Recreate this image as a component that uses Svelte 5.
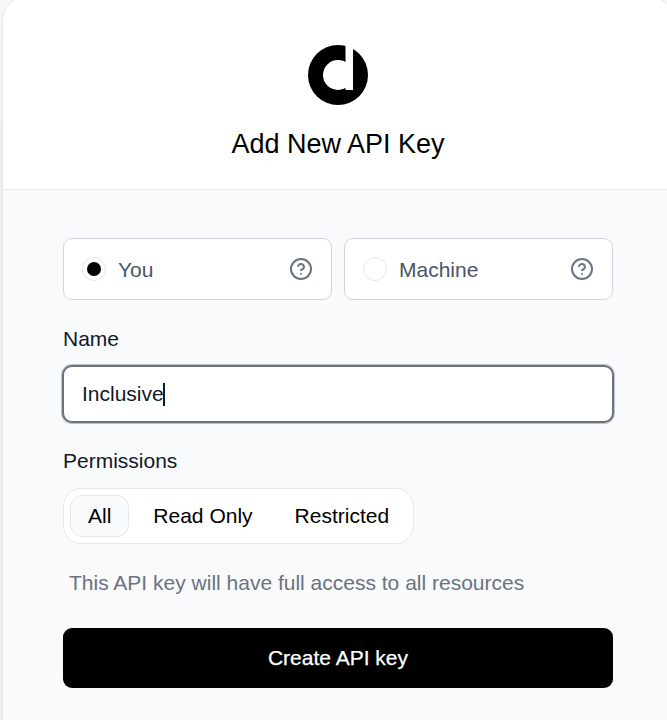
<script>
  let owner = $state('You');
  let permission = $state('All');
  let name = $state('Inclusive');
  const owners = ['You', 'Machine'];
  const permissions = ['All', 'Read Only', 'Restricted'];
</script>

<div class="page">
  <div class="modal">
    <header>
      <svg class="logo" viewBox="0 0 60 60" aria-hidden="true">
        <circle cx="30" cy="30" r="30" fill="#000" />
        <circle cx="30" cy="30" r="15" fill="#fff" />
        <path d="M37.5 0H45V45H37.5Z" fill="#fff" />
      </svg>
      <h1>Add New API Key</h1>
    </header>
    <main>
      <div class="owners">
        {#each owners as o}
          <button class="owner" onclick={() => (owner = o)}>
            <span class="radio">{#if owner === o}<i></i>{/if}</span>
            <span class="label">{o}</span>
            <svg viewBox="0 0 24 24" fill="none" stroke="#6b7280" stroke-width="2" stroke-linecap="round" stroke-linejoin="round">
              <circle cx="12" cy="12" r="10" />
              <path d="M9.09 9a3 3 0 0 1 5.83 1c0 2-3 3-3 3" />
              <path d="M12 17h.01" />
            </svg>
          </button>
        {/each}
      </div>
      <div class="caption name">Name</div>
      <div class="field"><span>{name}</span><span class="caret"></span></div>
      <div class="caption perm">Permissions</div>
      <div class="tabs">
        {#each permissions as p}
          <button class:active={permission === p} onclick={() => (permission = p)}>{p}</button>
        {/each}
      </div>
      <p>This API key will have full access to all resources</p>
      <button class="submit">Create API key</button>
    </main>
  </div>
</div>

<style>
  :global(body) { margin: 0; overflow: hidden; }
  .page {
    box-sizing: border-box;
    width: 667px;
    height: 720px;
    padding-left: 3px;
    overflow: hidden;
    background: linear-gradient(#f7f7f7, #ececed 200px);
    font-family: "Liberation Sans", Arial, sans-serif;
    font-size: 21px;
    line-height: 30px;
  }
  button {
    font: inherit;
    border: 0;
    margin: 0;
    padding: 0;
    background: none;
  }
  .modal {
    box-sizing: border-box;
    width: 670px;
    height: 742px;
    margin-top: -3px;
    border-radius: 24px;
    overflow: hidden;
    background: #f9fafb;
    box-shadow: 0 0 0 1px #e5e7eb;
  }
  header {
    box-sizing: border-box;
    height: 193px;
    padding-top: 48px;
    display: flex;
    flex-direction: column;
    align-items: center;
    background: #fff;
    border-bottom: 1px solid #e5e7eb;
  }
  .logo { width: 60px; height: 60px; }
  h1 {
    margin: 18px 0 0;
    font-size: 27px;
    font-weight: 400;
    line-height: 42px;
    color: #000;
  }
  main {
    padding: 48px 60px 0;
    display: flex;
    flex-direction: column;
    align-items: stretch;
  }
  .owners { display: flex; gap: 12px; }
  .owner {
    box-sizing: border-box;
    flex: 1;
    height: 62px;
    padding: 0 18px;
    display: flex;
    align-items: center;
    border: 1px solid #d1d5db;
    border-radius: 9px;
    background: #fff;
    color: #4b5563;
    text-align: left;
  }
  .radio {
    box-sizing: border-box;
    width: 24px;
    height: 24px;
    display: flex;
    align-items: center;
    justify-content: center;
    border: 1px solid #e5e7eb;
    border-radius: 50%;
  }
  .radio i { width: 14.5px; height: 14.5px; border-radius: 50%; background: #000; }
  .label { flex: 1; margin-left: 12px; padding-top: 2px; }
  .owner svg { width: 24px; height: 24px; }
  .caption { color: #111827; }
  .name { margin-top: 24px; }
  .field {
    box-sizing: border-box;
    height: 58px;
    margin: 11px -1px 0;
    padding: 0 18px;
    display: flex;
    align-items: center;
    border: 2px solid #6b7280;
    border-radius: 10px;
    background: #fff;
    box-shadow: 0 0 0 1px rgba(107, 114, 128, 0.4);
    color: #111827;
  }
  .caret { width: 2px; height: 23px; margin-left: -1px; background: #111827; }
  .perm { margin-top: 23px; }
  .tabs {
    box-sizing: border-box;
    align-self: flex-start;
    height: 56px;
    margin-top: 12px;
    padding: 6px;
    display: flex;
    gap: 6px;
    border: 1px solid #e5e7eb;
    border-radius: 18px;
    background: #fff;
  }
  .tabs button {
    height: 42px;
    padding: 0 17px;
    border: 1px solid transparent;
    border-radius: 12px;
    color: #000;
  }
  .tabs .active { background: #f9fafb; border-color: #e5e7eb; }
  p { margin: 24px 0 0 6px; color: #6b7280; white-space: nowrap; }
  .submit {
    height: 60px;
    margin-top: 30px;
    border-radius: 9px;
    background: #000;
    color: #fff;
    -webkit-text-stroke: 0.25px #fff;
  }
</style>
